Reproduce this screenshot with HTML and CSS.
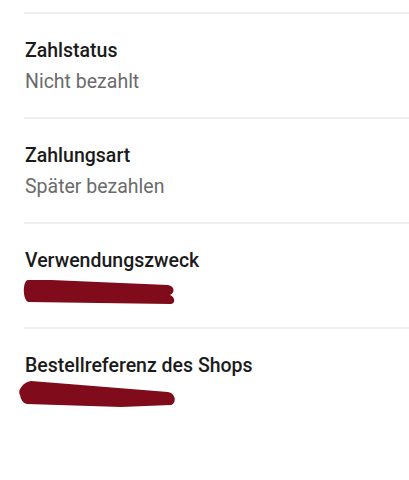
FILE: index.html
```html
<!DOCTYPE html>
<html lang="de">
<head>
<meta charset="utf-8">
<title>Zahlungsdetails</title>
<link rel="stylesheet" href="styles.css">
</head>
<body>
<div class="details">
  <div class="row">
    <div class="label">Zahlstatus</div>
    <div class="value">Nicht bezahlt</div>
  </div>
  <div class="row">
    <div class="label">Zahlungsart</div>
    <div class="value">Später bezahlen</div>
  </div>
  <div class="row">
    <div class="label">Verwendungszweck</div>
    <svg class="redacted" viewBox="0 0 160 24" width="160" height="24" aria-hidden="true">
      <path d="M3,0 C-2,0 -3,18 3,22 L146,24 C151,23 150,17 145,15 C150,13 150,6 143,5 L26,0 Z"/>
    </svg>
  </div>
  <div class="row">
    <div class="label">Bestellreferenz des Shops</div>
    <svg class="redacted" viewBox="0 0 160 24" width="160" height="24" aria-hidden="true">
      <path d="M6,-4 C-2,-3 -8,6 -5,10 C-4,15 -2,18 2,19 L96,22 L146,20 C151,19 152,9 143,7 Z"/>
    </svg>
  </div>
</div>
</body>
</html>
```
FILE: styles.css
```css
html, body {
  margin: 0;
  background: #ffffff;
}

body {
  font-family: Roboto, "Noto Sans", Arial, sans-serif;
  font-size: 19.5px;
}

.details {
  padding-top: 12px;
  padding-left: 24px;
}

.row {
  border-top: 2px solid #eeeeee;
  padding: 25px 0 23px 1px;
}

.label {
  font-weight: 500;
  line-height: 24px;
  color: #1b1b1b;
}

.value {
  margin-top: 7px;
  line-height: 24px;
  color: #6b6b6b;
}

.redacted {
  display: block;
  margin-top: 7px;
  overflow: visible;
  fill: #7f0b1b;
}
```
